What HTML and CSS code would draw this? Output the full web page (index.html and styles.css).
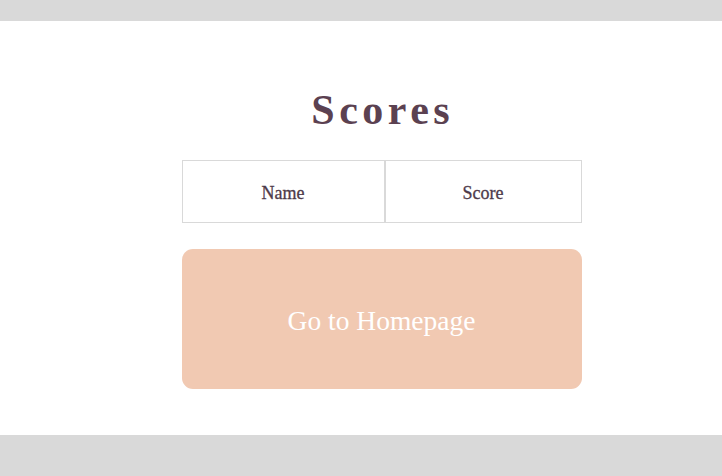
FILE: index.html
```html
<!DOCTYPE html>
<html>
<head>
<meta charset="utf-8">
<link rel="stylesheet" href="styles.css">
</head>
<body>
<main class="page">
  <h1 class="title">Scores</h1>
  <table class="scores">
    <thead>
      <tr><th class="col-name">Name</th><th class="col-score">Score</th></tr>
    </thead>
  </table>
  <button class="home-btn">Go to Homepage</button>
</main>
</body>
</html>
```
FILE: styles.css
```css
html, body {
  margin: 0;
  padding: 0;
  background: #d9d9d9;
  height: 100%;
}
body {
  padding-top: 21px;
  box-sizing: border-box;
  font-family: "Liberation Serif", "Times New Roman", serif;
}
.page {
  background: #fff;
  height: 414px;
  padding-left: 41px;
  display: flex;
  flex-direction: column;
  align-items: center;
}
.title {
  margin: 65px 0 0 0;
  font-size: 42px;
  line-height: 48px;
  font-weight: bold;
  letter-spacing: 4.5px;
  color: #5b4151;
  padding-left: 2.5px;
}
.scores {
  margin-top: 26px;
  width: 400px;
  border-collapse: separate;
  border-spacing: 0;
}
.scores th {
  border: 1px solid #d9d9d9;
  height: 63px;
  padding: 3px 0 0 0;
  box-sizing: border-box;
  font-size: 18px;
  font-weight: normal;
  color: #4e3a4a;
  -webkit-text-stroke: 0.3px #4e3a4a;
}
.col-name { width: 203px; }
.home-btn {
  margin-top: 26px;
  width: 400px;
  height: 140px;
  border: none;
  border-radius: 11px;
  background: #f1c9b2;
  color: #fff;
  font-family: "Liberation Serif", "Times New Roman", serif;
  font-size: 27.5px;
  padding: 3px 0 0 0;
}
```
